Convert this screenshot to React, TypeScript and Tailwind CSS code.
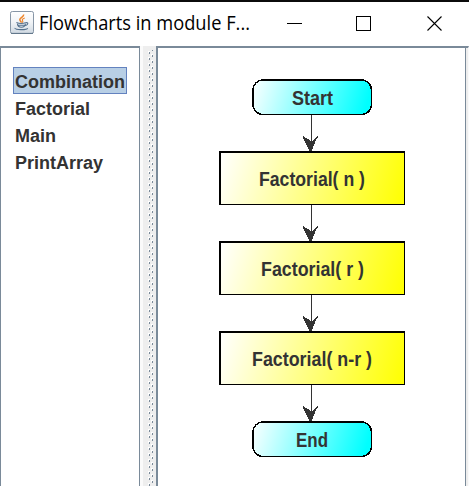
import React from "react";

const modules = ["Combination", "Factorial", "Main", "PrintArray"];

function JavaIcon() {
  return (
    <svg width="24" height="23" viewBox="0 0 24 23" className="block shrink-0">
      <defs>
        <linearGradient id="tile" x1="0" y1="0" x2="0" y2="1">
          <stop offset="0" stopColor="#ffffff" />
          <stop offset="0.5" stopColor="#f0f3f6" />
          <stop offset="1" stopColor="#cfd8e1" />
        </linearGradient>
      </defs>
      <rect x="0.5" y="0.5" width="23" height="22" rx="1.8" fill="url(#tile)" stroke="#8796a6" />
      <path d="M1 22.4h22" stroke="#5f7488" strokeWidth="1" />
      <path d="M13.6 3.6c.8 2.2-3.9 3.2-3.8 5.2.1 1.2 1.3 1.7 1.8 2.8" fill="none" stroke="#ee8326" strokeWidth="1.5" />
      <path d="M14.8 7c-2.4.9-3 1.7-2.2 2.7.5.7.2 1.4-.4 1.9" fill="none" stroke="#ee8326" strokeWidth="1.1" />
      <path d="M6.4 11.6c2.5 1 7 .9 9.2.2M7.4 12.6c.2 2.6 1 3.6 4 3.6s3.7-1 4-3.4M15.6 11.8c3-.9 3 1.9-.3 2.8M5 17c-.7 2 11.8 2.3 12.7.2M7.3 14.3h7" fill="none" stroke="#55728e" strokeWidth="1.1" />
    </svg>
  );
}

function TitleBar() {
  return (
    <header className="flex h-[46px] shrink-0 border-t-2 border-[#0b0b0b] bg-white pl-[10px] pt-[9px]">
      <JavaIcon />
      <div className="ml-[5px] w-[241px] shrink-0">
        <svg width="240" height="32" className="block overflow-visible">
          <text x="0" y="19" textLength="211" lengthAdjust="spacingAndGlyphs" fill="#000" className="font-['Open_Sans','Noto_Sans',sans-serif] text-[19.5px]">
            Flowcharts in module F...
          </text>
        </svg>
      </div>
      <svg width="162" height="20" viewBox="0 0 162 20" className="block shrink-0" fill="none" stroke="#000" shapeRendering="crispEdges">
        <path d="M7 12.5h15" />
        <rect x="76.5" y="5.5" width="14" height="14" />
        <path d="M147.5 5.5l14 14M161.5 5.5l-14 14" shapeRendering="auto" strokeWidth="1.1" />
      </svg>
    </header>
  );
}

function ModuleList() {
  return (
    <aside className="w-[140px] shrink-0 border-l border-r border-t-2 border-[#7a8a99] bg-white pl-3 pt-[19px]">
      <ul className="font-['Liberation_Sans',Arial,sans-serif] text-[18px] font-bold text-[#333333]">
        {modules.map((name, i) => (
          <li key={name} className="flex h-[27px]">
            <span
              className={
                i === 0
                  ? "h-[27px] w-[114px] whitespace-nowrap border border-[#6382bf] bg-[#b8cfe5] pl-px leading-[29px]"
                  : "h-[27px] whitespace-nowrap pl-[2px] leading-[31px]"
              }
            >
              {name}
            </span>
          </li>
        ))}
      </ul>
    </aside>
  );
}

function Divider() {
  return (
    <div className="flex w-4 shrink-0 border-l-[3px] border-[#fafafa] bg-[#eeeeee]">
      <svg width="13" height="440" className="block" shapeRendering="crispEdges">
        <defs>
          <pattern id="grip" x="0" y="0" width="13" height="6" patternUnits="userSpaceOnUse">
            <rect x="5" y="5" width="2" height="1" fill="#fff" />
            <rect x="5" y="0" width="1" height="1" fill="#fff" />
            <rect x="6" y="0" width="1" height="2" fill="#7a8a99" />
            <rect x="8" y="2" width="2" height="1" fill="#fff" />
            <rect x="8" y="3" width="1" height="1" fill="#fff" />
            <rect x="9" y="3" width="1" height="2" fill="#7a8a99" />
          </pattern>
        </defs>
        <rect y="4" width="13" height="436" fill="url(#grip)" />
      </svg>
    </div>
  );
}

function Label({ text, width }: { text: string; width: number }) {
  return (
    <svg width={width} height="26" className="block overflow-visible">
      <text x="0" y="19.5" textLength={width} lengthAdjust="spacingAndGlyphs" fill="#333333" className="font-['Liberation_Sans',Arial,sans-serif] text-[19.5px] font-bold">
        {text}
      </text>
    </svg>
  );
}

function Terminal({ text, width }: { text: string; width: number }) {
  return (
    <div className="relative flex h-9 w-[120px] items-center justify-center">
      <svg width="120" height="36" className="absolute inset-0 block">
        <defs>
          <linearGradient id={"fill" + text} gradientUnits="userSpaceOnUse" x1="0" y1="0" x2="112" y2="34">
            <stop offset="0" stopColor="#fff" />
            <stop offset="1" stopColor="#0ff" />
          </linearGradient>
        </defs>
        <rect x="1" y="1" width="118.5" height="34.5" rx="10" fill={"url(#fill" + text + ")"} stroke="#000" strokeWidth="1.4" shapeRendering="crispEdges" />
      </svg>
      <div className="relative pt-px">
        <Label text={text} width={width} />
      </div>
    </div>
  );
}

function Process({ text, width }: { text: string; width: number }) {
  return (
    <div className="flex h-[54px] w-[186px] items-center justify-center border-b border-l-2 border-r border-t-2 border-black bg-[linear-gradient(106.2deg,#fff,#ff0)] pr-px">
      <Label text={text} width={width} />
    </div>
  );
}

function Arrow() {
  return (
    <svg width="186" height="36" className="block" shapeRendering="crispEdges">
      <rect x="92" y="0" width="1" height="26" fill="#333" />
      <path d="M84 21h1v1h1v1h2v1h2v1h1v1h3v-1h1v-1h1v-1h1v-1h1v-1h1v2h-1v1h-1v2h-1v3h-1v2h-1v3h-1v2h-3v-2h-1v-2h-1v-2h-1v-2h-1v-2h-1v-2h-1v-2h-1z" fill="#333" />
    </svg>
  );
}

export default function App() {
  return (
    <div className="flex h-[486px] w-[469px] flex-col overflow-hidden bg-white">
      <TitleBar />
      <div className="flex h-[440px]">
        <ModuleList />
        <Divider />
        <main className="flex w-[310px] shrink-0 flex-col items-center border-l-2 border-r border-t-2 border-[#7a8a99] bg-white pl-px pt-[31px]">
          <Terminal text="Start" width={41} />
          <Arrow />
          <Process text="Factorial( n )" width={106} />
          <Arrow />
          <Process text="Factorial( r )" width={103} />
          <Arrow />
          <Process text="Factorial( n-r )" width={120} />
          <Arrow />
          <Terminal text="End" width={32} />
        </main>
        <div className="w-[3px] shrink-0 border-r border-t-2 border-t-[#7a8a99] border-r-[#fafafa] bg-[#eeeeee]" />
      </div>
    </div>
  );
}
